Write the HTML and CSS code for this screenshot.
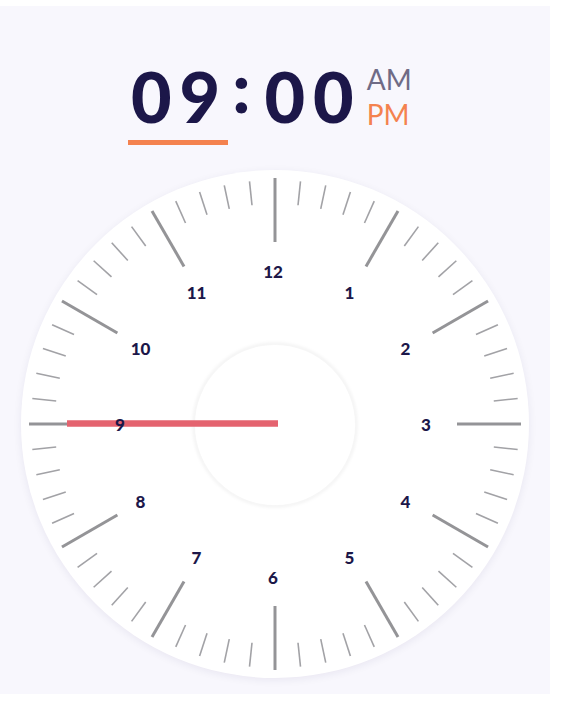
FILE: index.html
```
<!DOCTYPE html>
<html lang="en">
<head>
    <meta charset="UTF-8">
    <meta name="viewport" content="width=device-width, initial-scale=1.0">
    <title>Time Picker</title>
    <link rel="stylesheet" href="styles.css">
</head>
<body>

<div class="panel">
    <div class="time">
        <div class="digits">
            <span class="hours">09</span><span class="colon">:</span><span class="minutes">00</span>
        </div>
        <div class="meridiem">
            <span class="am">AM</span>
            <span class="pm active">PM</span>
        </div>
    </div>

    <div class="clock">
        <svg class="face" width="508" height="508" viewBox="-254 -254 508 508">
            <defs>
                <filter id="soft" x="-20%" y="-20%" width="140%" height="140%">
                    <feGaussianBlur stdDeviation="1.6"></feGaussianBlur>
                </filter>
            </defs>
            <g id="ticks"></g>
            <circle class="inner-ring" cx="0" cy="1" r="81" filter="url(#soft)"></circle>
            <circle class="inner" cx="0" cy="1" r="80"></circle>
            <line class="hand" x1="-208" y1="-0.5" x2="3" y2="-0.5"></line>
            <g id="numbers"></g>
        </svg>
    </div>
</div>

<script>
    const NS = "http://www.w3.org/2000/svg";

    function drawTicks() {
        const ticks = document.getElementById("ticks");
        for (let i = 0; i < 60; i++) {
            const a = i * Math.PI / 30;
            const major = i % 5 === 0;
            const r1 = major ? 182 : 220;
            const r2 = major ? 246 : 244;
            const line = document.createElementNS(NS, "line");
            line.setAttribute("x1", (Math.sin(a) * r1).toFixed(2));
            line.setAttribute("y1", (-Math.cos(a) * r1).toFixed(2));
            line.setAttribute("x2", (Math.sin(a) * r2).toFixed(2));
            line.setAttribute("y2", (-Math.cos(a) * r2).toFixed(2));
            line.setAttribute("class", major ? "tick major" : "tick");
            ticks.appendChild(line);
        }
    }

    function drawNumbers() {
        const numbers = document.getElementById("numbers");
        for (let h = 1; h <= 12; h++) {
            const a = h * Math.PI / 6;
            const text = document.createElementNS(NS, "text");
            text.setAttribute("x", (Math.sin(a) * 153 - 2).toFixed(2));
            text.setAttribute("y", (-Math.cos(a) * 153 + 7).toFixed(2));
            text.setAttribute("class", "num");
            text.textContent = h;
            numbers.appendChild(text);
        }
    }

    drawTicks();
    drawNumbers();
</script>

</body>
</html>
```

FILE: styles.css
```
body {
    margin: 0;
    background: #fff;
    font-family: Lato, "Liberation Sans", sans-serif;
}
.panel {
    width: 550px;
    height: 688px;
    margin-top: 6px;
    background: #f8f7fd;
    display: flex;
    flex-direction: column;
    align-items: center;
}
.time {
    display: flex;
    align-items: flex-start;
    align-self: flex-start;
    height: 100px;
    margin-top: 50px;
    margin-left: 128px;
}
.digits {
    font-size: 70px;
    font-weight: 900;
    color: #1c1749;
    line-height: 80px;
    letter-spacing: 8px;
    white-space: nowrap;
}
.hours {
    display: inline-block;
    border-bottom: 5px solid #f4824f;
    padding-bottom: 4px;
    padding-left: 3px;
}
.colon {
    display: inline-block;
    margin: 0 6px 0 4px;
    position: relative;
    top: -10px;
}
.meridiem {
    display: flex;
    flex-direction: column;
    margin-left: 5px;
    margin-top: 6px;
    font-size: 28px;
    line-height: 35px;
}
.am {
    color: #6f6b86;
}
.pm {
    color: #8a87a0;
}
.pm.active {
    color: #f4824f;
}
.clock {
    width: 508px;
    height: 508px;
    margin-top: 14px;
    border-radius: 50%;
    background: #fff;
    box-shadow: 0 2px 8px rgba(30, 20, 80, 0.07);
}
.face {
    display: block;
}
.tick {
    stroke: #a2a2a6;
    stroke-width: 1.6;
}
.tick.major {
    stroke: #949497;
    stroke-width: 3;
}
.inner-ring {
    fill: none;
    stroke: rgba(0, 0, 0, 0.05);
    stroke-width: 3;
}
.inner {
    fill: #fff;
}
.hand {
    stroke: #e4636f;
    stroke-width: 6.5;
}
.num {
    font-family: Lato, "Liberation Sans", sans-serif;
    font-size: 17px;
    font-weight: 900;
    fill: #1c1749;
    text-anchor: middle;
}
```
